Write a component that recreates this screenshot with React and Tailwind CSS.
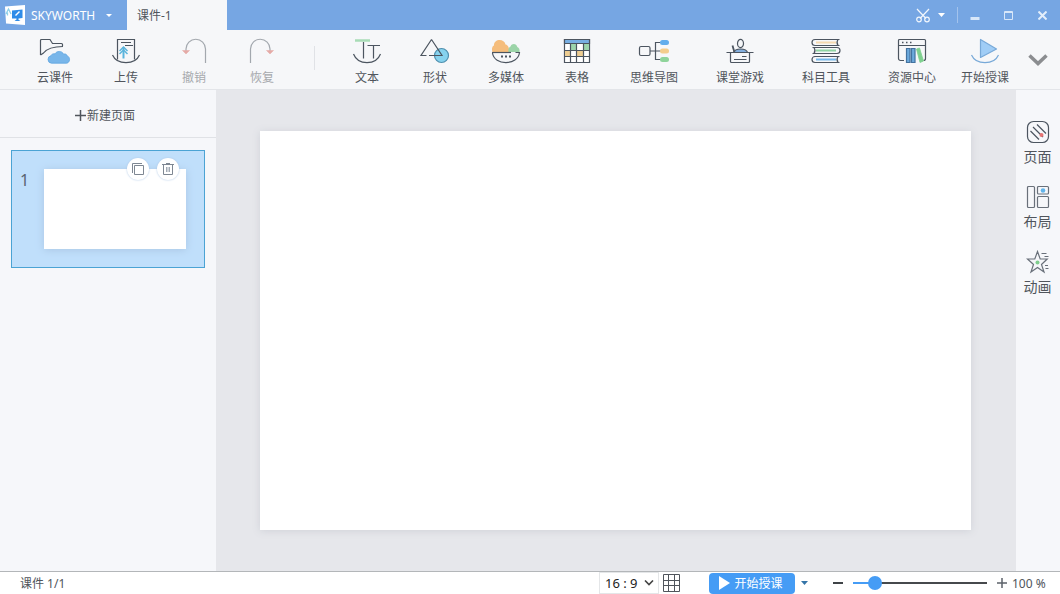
import { useState } from "react";
import clsx from "clsx";

const INK = "#4c5560";

const ToolSvg = ({ children, stroke = INK }) => (
  <svg
    width="32"
    height="28"
    viewBox="0 0 32 28"
    fill="none"
    stroke={stroke}
    strokeWidth="1.2"
    aria-hidden="true"
  >
    {children}
  </svg>
);

const CloudIcon = () => (
  <ToolSvg>
    <path d="M1.500 18V3.500a1 1 0 0 1 1-1H11l2.500 4h9a1 1 0 0 1 1 1V9" />
    <path d="M1.500 18 4.500 16C8 11.500 13 9.500 24 9.500" />
    <path
      d="M12.500 26.200a3.800 3.800 0 0 1-.5-7.500c.6-1.500 2.300-2.300 4-1.800 1.500-3.300 7.300-3.300 8.500.3 1.500-.6 3.300-.1 3.600 1.700 3.400.9 3.300 6.800-.6 7.300z"
      fill="#78b6ea"
      stroke="#5ea5e0"
      strokeWidth="0.8"
    />
  </ToolSvg>
);

const UploadIcon = () => (
  <ToolSvg>
    <path d="M7.500 22.500v-20h17v20" />
    <path d="M2.500 18C7 28.200 25 28.200 29.500 18" />
    <path d="M11 5.500h10M15 8.500h8" />
    <path d="M13.500 10v11.500" stroke="#5bb4dc" strokeWidth="2" />
    <path d="m9.500 14 4-4 4 4M9.500 17l4-4 4 4" stroke="#5bb4dc" strokeWidth="1.500" />
  </ToolSvg>
);

const UndoIcon = () => (
  <ToolSvg stroke="#a3a8ae">
    <path d="M27.500 26V12a9.750 9.750 0 0 0-19.500 0v3" />
    <path d="M4.500 13.500h7L8 17z" fill="#e5aaa6" stroke="#e5aaa6" strokeWidth="0.5" />
  </ToolSvg>
);

const RedoIcon = () => (
  <ToolSvg stroke="#a3a8ae">
    <path d="M4.500 26V12a9.750 9.750 0 0 1 19.500 0v3" />
    <path d="M20.500 13.500h7L24 17z" fill="#e5aaa6" stroke="#e5aaa6" strokeWidth="0.5" />
  </ToolSvg>
);

const TextIcon = () => (
  <ToolSvg>
    <path d="M4 3.500h15" stroke="#a8dcb6" strokeWidth="2.500" />
    <path d="M12.500 5v16.500M16.500 8.500H29M22.500 8.500v13" />
    <path d="M2.500 17C7 28.500 25 28.500 29.500 17" />
  </ToolSvg>
);

const ShapeIcon = () => (
  <ToolSvg>
    <circle cx="22.500" cy="18.500" r="7" fill="#86d2ee" stroke="#4f8fae" />
    <path d="M12.500 2.500 2 18.500h5.500M12.500 2.500l10.500 16H10" />
  </ToolSvg>
);

const MediaIcon = () => (
  <ToolSvg>
    <path
      d="M2.500 15C1.300 11.500 2.500 9 4 8.500 3.500 1.500 14.500 1 15.500 7.500c3 .5 4 4 3.500 7.500z"
      fill="#f5bd7c"
      stroke="none"
    />
    <path d="M18.500 15c-.5-3 .5-5 2-5.500 1.500-3.500 6-3 6.800.5 1.700.5 2.700 2.500 2.200 5z" fill="#9bd4a8" stroke="none" />
    <path d="M2 15.500h19" />
    <path d="M2.500 16C4 28.800 28 28.800 29.500 15.500h-4" />
    <path d="M11 19.500h2M15 19.500h2M19 19.500h2" strokeWidth="2" />
  </ToolSvg>
);

const TableIcon = () => (
  <ToolSvg>
    <path d="M3.500 2.500h25v23h-25z" fill="#fff" />
    <path d="M3.500 2.500h25v4h-25z" fill="#78afe3" />
    <path d="M10 7h6v6h-6zM22 7h6v6h-6z" fill="#9cd5ac" stroke="none" />
    <path d="M4 13h6v6H4zM16 13h6v6h-6z" fill="#edcd92" stroke="none" />
    <path d="M9.500 6.500v19M15.500 6.500v19M22.500 6.500v19M3.500 13.500h25M3.500 19.500h25" />
  </ToolSvg>
);

const MindMapIcon = () => (
  <ToolSvg>
    <rect x="1.500" y="9.500" width="10.500" height="9" rx="1.500" />
    <path d="M12 14h11M23 5.500h-5.500v17H23" />
    <rect x="22" y="3" width="9" height="5" rx="2.500" fill="#62adec" stroke="none" />
    <rect x="22" y="11.500" width="9" height="5" rx="2.500" fill="#f3cd8d" stroke="none" />
    <rect x="22" y="20" width="9" height="5" rx="2.500" fill="#8fd49b" stroke="none" />
  </ToolSvg>
);

const GameIcon = () => (
  <ToolSvg>
    <ellipse cx="16.500" cy="6.500" rx="3" ry="4.200" />
    <path d="M9.500 15.500c1-2.500 3-3.500 7-3.500s6.500 1.500 7 3.500z" fill="#82aede" />
    <path d="m8.500 8.500 2 7" strokeWidth="1.800" />
    <path d="M2.500 15.500h27M6.500 15.500v9a1 1 0 0 0 1 1h17a1 1 0 0 0 1-1v-9" />
    <path d="M18 19.500h4.500M10 22.500h12.500" />
  </ToolSvg>
);

const BooksIcon = () => (
  <ToolSvg>
    <path d="M6 5.500h20" stroke="#f5d9b0" strokeWidth="2" />
    <path d="M6 13.500h20" stroke="#8fd5a2" strokeWidth="2" />
    <path d="M6 22.500h20" stroke="#74b8ea" strokeWidth="2" />
    <g strokeWidth="1.200">
      <path d="M29.500 2.500H5a3 3 0 0 0 0 6h24.500M28 2.500q-2 3 0 6" />
      <path d="M2.500 10.500H27a3 3 0 0 1 0 6H2.500M4 10.500q2 3 0 6" />
      <path d="M29.500 19.500H5a3 3 0 0 0 0 6h24.500M28 19.500q-2 3 0 6" />
    </g>
  </ToolSvg>
);

const LibraryIcon = () => (
  <ToolSvg>
    <path d="M8 23.500H4.500a2 2 0 0 1-2-2v-18a1 1 0 0 1 1-1h25a1 1 0 0 1 1 1v18a2 2 0 0 1-2 2M2.500 8.500h27" />
    <path d="M6 5.500h1.500M10 5.500h1.500M14 5.500h1.500" strokeWidth="1.500" />
    <path d="M10.500 11.500h3.500v14h-3.500zM15.500 11.500H19v14h-3.500z" fill="#6ba9dc" stroke="#43729f" />
    <path d="m20.500 12 3-1 4 13-3.500 1.500z" fill="#7fd08f" stroke="#7fd08f" strokeWidth="0.800" />
  </ToolSvg>
);

const TeachIcon = () => (
  <ToolSvg stroke="#78a9d8">
    <path d="M11.500 2.500v18l16-8.500z" fill="#a0cdf6" strokeLinejoin="round" />
    <path d="M2.500 18C7 28.200 25 28.200 29.500 18" />
  </ToolSvg>
);

const fileTools = [
  { label: "云课件", icon: CloudIcon, width: "w-[74px]" },
  { label: "上传", icon: UploadIcon, width: "w-[68px]" },
  { label: "撤销", icon: UndoIcon, width: "w-[68px]", disabled: true },
  { label: "恢复", icon: RedoIcon, width: "w-[68px]", disabled: true },
];

const insertTools = [
  { label: "文本", icon: TextIcon, width: "w-[68px]" },
  { label: "形状", icon: ShapeIcon, width: "w-[68px]" },
  { label: "多媒体", icon: MediaIcon, width: "w-[74px]" },
  { label: "表格", icon: TableIcon, width: "w-[68px]" },
  { label: "思维导图", icon: MindMapIcon, width: "w-[86px]" },
  { label: "课堂游戏", icon: GameIcon, width: "w-[86px]" },
  { label: "科目工具", icon: BooksIcon, width: "w-[86px]" },
  { label: "资源中心", icon: LibraryIcon, width: "w-[86px]" },
  { label: "开始授课", icon: TeachIcon, width: "w-[60px]" },
];

const ToolButton = ({ label, icon: Icon, width, disabled }) => (
  <button
    type="button"
    disabled={disabled}
    className={clsx(
      "flex shrink-0 flex-col items-center gap-[5px] pt-[7px] leading-4",
      width,
      disabled ? "text-[#a6a9ad]" : "text-[#50555c]"
    )}
  >
    <Icon />
    <span>{label}</span>
  </button>
);

const TitleBar = () => (
  <header className="flex h-[30px] shrink-0 items-stretch bg-[#76a6e3] text-white">
    <button type="button" className="flex w-[127px] items-center gap-1.5 pl-[5px]">
      <svg width="20" height="20" viewBox="0 0 20 20" aria-hidden="true">
        <path d="M0 1.500 20 0v20L1 18.500z" fill="#fff" />
        <path d="m7 5.500 10.500-1v8.500l-4 .5v1.200l2 1.300H9.500l2-1.500v-1H7z" fill="#2f8ce8" />
        <path d="m10.500 10.500 4-4" stroke="#fff" strokeWidth="1.500" fill="none" />
        <path d="m1 9 2.500-5L6 9M2.500 7.500v3" stroke="#8fd0ea" strokeWidth="1.300" fill="none" />
      </svg>
      <span className="w-[69px] pt-0.5 text-left">SKYWORTH</span>
      <svg width="6" height="3" viewBox="0 0 6 3" aria-hidden="true">
        <path d="M0 0h6L3 3z" fill="#fff" />
      </svg>
    </button>
    <div className="flex w-[100px] items-center bg-[#f6f7f9] pt-0.5 pl-2.5 text-[#50555c]">课件-1</div>
    <div className="ml-auto flex items-center">
      <button type="button" aria-label="截图" className="flex items-center gap-2">
        <svg width="14" height="15" viewBox="0 0 14 15" fill="none" stroke="#f2f7fd" strokeWidth="1.200" aria-hidden="true">
          <path d="m1 1 9 9.500M13 1l-9 9.500" />
          <circle cx="3" cy="11.500" r="2.300" />
          <circle cx="11" cy="11.500" r="2.300" />
        </svg>
        <svg width="7" height="4" viewBox="0 0 7 4" aria-hidden="true">
          <path d="M0 0h7L3.500 4z" fill="#fff" />
        </svg>
      </button>
      <span className="mx-3 h-4 w-px bg-[#a3c3ed]" />
      <button type="button" aria-label="最小化" className="flex h-full w-[34px] items-center justify-start">
        <svg width="10" height="10" viewBox="0 0 10 10" aria-hidden="true">
          <path d="M0.500 8.500H9.500" stroke="#d8e7f9" strokeWidth="3" />
        </svg>
      </button>
      <button type="button" aria-label="最大化" className="flex h-full w-[34px] items-center justify-start">
        <svg width="9" height="9" viewBox="0 0 9 9" fill="none" stroke="#d8e7f9" aria-hidden="true">
          <path d="M.5.500h8v8h-8zM0 1.500h9" />
        </svg>
      </button>
      <button type="button" aria-label="关闭" className="mr-[13px] flex h-full items-center">
        <svg width="9" height="9" viewBox="0 0 9 9" stroke="#e3eefb" strokeWidth="2" aria-hidden="true">
          <path d="m.5.500 8 8M8.500.500l-8 8" />
        </svg>
      </button>
    </div>
  </header>
);

const Toolbar = () => (
  <nav className="flex h-[60px] shrink-0 border-b border-[#e3e5e9] bg-[#f6f7f9] pl-[18px]">
    {fileTools.map((tool) => (
      <ToolButton key={tool.label} {...tool} />
    ))}
    <span className="mx-[18px] mt-4 h-6 w-px shrink-0 bg-[#e0e2e6]" />
    {insertTools.map((tool) => (
      <ToolButton key={tool.label} {...tool} />
    ))}
    <button type="button" aria-label="更多" className="ml-auto flex w-11 items-center justify-center">
      <svg width="20" height="12" viewBox="0 0 20 12" fill="none" stroke="#8b8d90" strokeWidth="3.500" aria-hidden="true">
        <path d="m1.500 1.500 8.500 8 8.500-8" />
      </svg>
    </button>
  </nav>
);

const RoundButton = ({ label, children }) => (
  <button
    type="button"
    aria-label={label}
    className="flex size-[22px] items-center justify-center rounded-full bg-white shadow-[0_0_2px_#a9c4e4]"
  >
    <svg width="14" height="14" viewBox="0 0 14 14" fill="none" stroke="#7e8792" aria-hidden="true">
      {children}
    </svg>
  </button>
);

const PageList = () => (
  <aside className="flex w-[216px] shrink-0 flex-col bg-[#f6f7fa]">
    <button
      type="button"
      className="flex h-12 items-center justify-center gap-px border-b border-[#e0e2e6] pt-1 pr-1.5 text-[#50555c]"
    >
      <svg width="11" height="11" viewBox="0 0 11 11" stroke="#50555c" strokeWidth="1.500" aria-hidden="true">
        <path d="M5.500 0v11M0 5.500h11" />
      </svg>
      新建页面
    </button>
    <ol className="px-[11px] pt-3">
      <li className="relative flex h-[118px] items-start border border-[#4ba3d4] bg-[#c0dffb]">
        <span className="w-8 pt-[19px] pl-2 text-base leading-5 text-[#5a6470]">1</span>
        <div className="mt-[18px] h-20 w-[142px] bg-white shadow-[0_1px_8px_#a9c6e4]" />
        <div className="absolute top-[7px] right-[25px] flex gap-2">
          <RoundButton label="复制页面">
            <path d="M3.500 3.500h9v9h-9zM1.500 11V1.500H11" />
          </RoundButton>
          <RoundButton label="删除页面">
            <path d="M1 2.500h12M5 1.500h4M2.500 2.500v10h9v-10" />
            <path d="M5.500 5v5M7 5v5M8.500 5v5" stroke="#a3abb5" />
          </RoundButton>
        </div>
      </li>
    </ol>
  </aside>
);

const PanelSvg = ({ children }) => (
  <svg width="24" height="24" viewBox="0 0 24 24" fill="none" stroke="#69707a" strokeWidth="1.200" aria-hidden="true">
    {children}
  </svg>
);

const PageIcon = () => (
  <PanelSvg>
    <rect x="1.500" y="1.500" width="21" height="21" rx="6" stroke="#4c5560" />
    <path d="m11 4.500 9 9M7 7l10 10M4.500 11l8.500 8.500" stroke="#4c5560" />
    <circle cx="15.500" cy="15" r="2" fill="#e57373" stroke="none" />
  </PanelSvg>
);

const LayoutIcon = () => (
  <PanelSvg>
    <rect x="1.500" y="1.500" width="7" height="21" rx="1" />
    <rect x="11.500" y="1.500" width="11" height="7.500" rx="1" />
    <rect x="11.500" y="11.500" width="11" height="11" rx="1" />
    <circle cx="17" cy="5.500" r="2.300" fill="#62b4ea" stroke="none" />
  </PanelSvg>
);

const AnimationIcon = () => (
  <PanelSvg>
    <path d="m11.500 1.500 2.700 7.500h7l-5.700 5.500 2.500 7.500-6.500-4.500L5 22l2.500-7.500L1.500 9h7.300z" />
    <path d="M15.500 3.500h5M18.500 6.500h4M19 15.500h3M19.500 18.500h3" />
    <circle cx="11.500" cy="12.500" r="2" fill="#7fce8d" stroke="none" />
  </PanelSvg>
);

const panels = [
  { label: "页面", icon: PageIcon },
  { label: "布局", icon: LayoutIcon },
  { label: "动画", icon: AnimationIcon },
];

const SidePanel = () => (
  <aside className="flex w-11 shrink-0 flex-col items-center gap-[18px] bg-[#f6f7fa] pt-[30px]">
    {panels.map(({ label, icon: Icon }) => (
      <button
        key={label}
        type="button"
        className="mr-px flex flex-col items-center gap-[3px] text-sm leading-5 text-[#50555c]"
      >
        <Icon />
        {label}
      </button>
    ))}
  </aside>
);

const StatusBar = () => {
  const [ratio, setRatio] = useState("16 : 9");
  const [zoom, setZoom] = useState(100);

  return (
    <footer className="flex h-[23px] shrink-0 items-center border-t border-[#b3b6b9] bg-white pr-3 pl-5 text-[#50555c]">
      <span className="pt-0.5">课件 1/1</span>
      <div className="relative ml-auto flex h-[22px] w-[60px] items-center border border-[#e4e6e8]">
        <select
          aria-label="页面比例"
          value={ratio}
          onChange={(e) => setRatio(e.target.value)}
          className="h-full w-full appearance-none bg-transparent pt-0.5 pl-[5px] text-[13px] text-[#222]"
        >
          <option>16 : 9</option>
          <option>4 : 3</option>
        </select>
        <svg
          className="pointer-events-none absolute right-1"
          width="10"
          height="6"
          viewBox="0 0 10 6"
          fill="none"
          stroke="#444"
          strokeWidth="1.600"
          aria-hidden="true"
        >
          <path d="m1 .5 4 4 4-4" />
        </svg>
      </div>
      <button type="button" aria-label="网格" className="ml-1 shrink-0">
        <svg width="18" height="18" viewBox="0 0 18 18" fill="none" stroke="#50555c" aria-hidden="true">
          <path d="M.5.500h16v17H.5zM5.500.500v17M11.500.500v17M.5 6.500h16M.5 11.500h16" />
        </svg>
      </button>
      <button
        type="button"
        className="ml-7 flex h-[21px] w-[86px] shrink-0 items-center justify-center gap-1 rounded-sm bg-[#459cf5] pr-0.5 text-white"
      >
        <svg width="11" height="14" viewBox="0 0 11 14" aria-hidden="true">
          <path d="M0 0v14l11-7z" fill="#fff" />
        </svg>
        <span className="pt-0.5">开始授课</span>
      </button>
      <button type="button" aria-label="授课选项" className="ml-1.5 shrink-0">
        <svg width="7" height="4" viewBox="0 0 7 4" aria-hidden="true">
          <path d="M0 0h7L3.500 4z" fill="#3474a8" />
        </svg>
      </button>
      <button type="button" aria-label="缩小" className="ml-[25px] shrink-0">
        <svg width="10" height="2" viewBox="0 0 10 2" aria-hidden="true">
          <path d="M0 0h10v2H0z" fill="#3f4347" />
        </svg>
      </button>
      <input
        type="range"
        aria-label="缩放"
        min="0"
        max="800"
        value={zoom}
        onChange={(e) => setZoom(Number(e.target.value))}
        className="mx-2.5 h-3.5 w-[134px] shrink-0 appearance-none bg-transparent [&::-webkit-slider-runnable-track]:h-0.5 [&::-webkit-slider-runnable-track]:bg-[linear-gradient(to_right,#459cf5_16%,#46494c_16%)] [&::-webkit-slider-thumb]:-mt-1.5 [&::-webkit-slider-thumb]:size-3.5 [&::-webkit-slider-thumb]:appearance-none [&::-webkit-slider-thumb]:rounded-full [&::-webkit-slider-thumb]:bg-[#459cf5]"
      />
      <button type="button" aria-label="放大" className="shrink-0">
        <svg width="10" height="10" viewBox="0 0 10 10" stroke="#5c626a" strokeWidth="1.500" aria-hidden="true">
          <path d="M5 0v10M0 5h10" />
        </svg>
      </button>
      <output className="ml-[5px] w-9 shrink-0 pt-0.5 whitespace-nowrap">{zoom} %</output>
    </footer>
  );
};

export default function App() {
  return (
    <div className="flex h-screen flex-col overflow-hidden bg-[#f6f7f9] font-['Noto_Sans','Noto_Sans_CJK_SC',sans-serif] text-xs">
      <TitleBar />
      <Toolbar />
      <div className="flex min-h-0 flex-1">
        <PageList />
        <main className="flex min-w-0 flex-1 items-center bg-[#e6e7eb] pr-[45px] pl-11">
          <div className="aspect-video w-full bg-white shadow-[0_1px_8px_#cfd1d8]" />
        </main>
        <SidePanel />
      </div>
      <StatusBar />
    </div>
  );
}
